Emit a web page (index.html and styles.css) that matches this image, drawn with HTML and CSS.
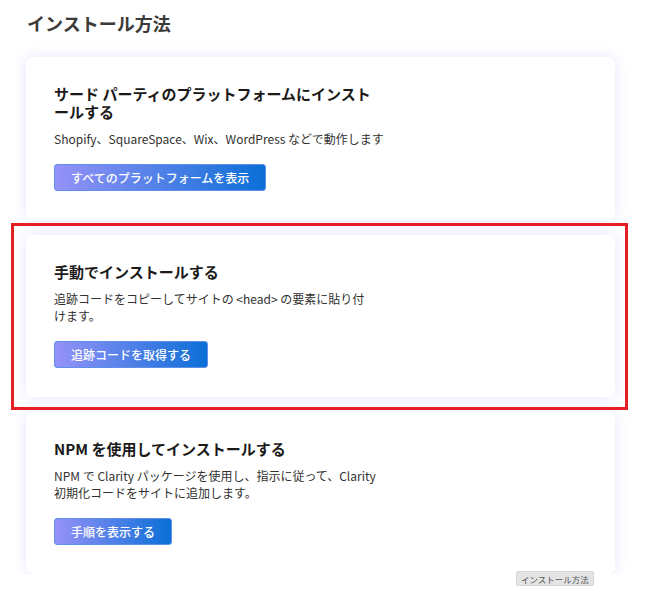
FILE: index.html
```html
<!DOCTYPE html>
<html lang="ja">
<head>
    <meta charset="UTF-8">
    <meta name="viewport" content="width=device-width, initial-scale=1.0">
    <title>インストール方法</title>
    <link rel="stylesheet" href="styles.css">
</head>
<body>
    <main class="page">
        <h1 class="page-title">インストール方法</h1>
        <div class="methods">
            <section class="method-card">
                <h2 class="method-title">サード パーティのプラットフォームにインストールする</h2>
                <p class="method-desc">Shopify、SquareSpace、Wix、WordPress などで動作します</p>
                <button class="method-btn">すべてのプラットフォームを表示</button>
            </section>
            <section class="method-card">
                <h2 class="method-title">手動でインストールする</h2>
                <p class="method-desc">追跡コードをコピーしてサイトの &lt;head&gt; の要素に貼り付<br>けます。</p>
                <button class="method-btn">追跡コードを取得する</button>
            </section>
            <section class="method-card">
                <h2 class="method-title">NPM を使用してインストールする</h2>
                <p class="method-desc">NPM で Clarity パッケージを使用し、指示に従って、Clarity 初期化コードをサイトに追加します。</p>
                <button class="method-btn">手順を表示する</button>
            </section>
        </div>
    </main>

    <!-- annotation over the second card -->
    <div class="highlight"></div>
    <div class="tooltip">インストール方法</div>
</body>
</html>
```

FILE: styles.css
```css
*{
    box-sizing: border-box;
}
body{
    margin: 0;
    background-color: #ffffff;
    font-family: "Noto Sans CJK JP", sans-serif;
    color: #242424;
}
.page{
    padding: 11px 0 0 26px;
    width: 615px;
}
.page-title{
    margin: 0 0 22px 1px;
    font-size: 18px;
    line-height: 24px;
    font-weight: 600;
    color: #3b3a39;
}
.methods{
    display: flex;
    flex-direction: column;
    gap: 15px;
}
.method-card{
    background-color: #ffffff;
    border-radius: 7px;
    padding: 28px 28px 29px;
    box-shadow: 0 0 14px rgba(115, 105, 255, 0.18);
}
.method-title{
    margin: 0 0 9px 0;
    max-width: 330px;
    font-size: 15px;
    line-height: 18px;
    font-weight: 700;
    color: #1b1a19;
}
.method-desc{
    margin: 0 0 17px 0;
    max-width: 330px;
    font-size: 12px;
    line-height: 17px;
    color: #323130;
}
.method-btn{
    display: block;
    height: 27px;
    padding: 0 16px;
    border: 1px solid #5f8fe6;
    border-radius: 3px;
    background: linear-gradient(90deg, #9592f8, #0b6fd7);
    color: #ffffff;
    font-family: "Noto Sans CJK JP", sans-serif;
    font-size: 12px;
    font-weight: 500;
    line-height: 25px;
}
.highlight{
    position: absolute;
    left: 11px;
    top: 223px;
    width: 617px;
    height: 187px;
    border: 3px solid #e41f26;
}
.tooltip{
    position: absolute;
    left: 516px;
    top: 571px;
    padding: 0 4px;
    height: 15px;
    line-height: 14px;
    font-size: 8.5px;
    color: #555555;
    background-color: #e4e4e4;
    border: 1px solid #d6d6d6;
    border-radius: 2px;
}
```
